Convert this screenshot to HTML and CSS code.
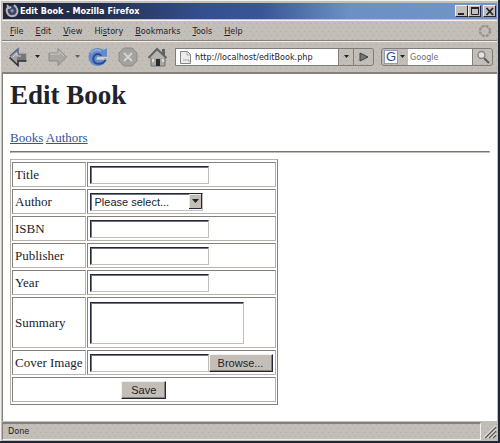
FILE: index.html
```html
<!DOCTYPE html>
<html lang="en">
<head>
<meta charset="utf-8">
<title>Edit Book</title>
<link rel="stylesheet" href="styles.css">
</head>
<body>
<div class="window">
  <header class="titlebar">
    <svg class="app-icon" width="14" height="14" viewBox="0 0 14 14" aria-hidden="true">
      <circle cx="7" cy="7" r="5.5" fill="#3c4664"/>
      <path d="M2 1 L4 4 L6 3 M3 3 C0 7 3 13 8 12 C12 12 14 7 11 3 L9 1" fill="none" stroke="#b9b6b2" stroke-width="2"/>
      <path d="M5 6 L8 5 L9 7 L7 9 Z" fill="#7896c8"/>
    </svg>
    <span class="caption">Edit Book - Mozilla Firefox</span>
    <div class="window-buttons">
      <button class="win-btn" aria-label="Minimize"><svg width="10" height="9" viewBox="0 0 10 9"><path d="M1 7h6" stroke="#20222c" stroke-width="2"/></svg></button>
      <button class="win-btn" aria-label="Maximize"><svg width="10" height="9" viewBox="0 0 10 9"><path d="M1.500 1v6.500h7V1M1 1h8" fill="none" stroke="#20222c"/><path d="M1 1h8" stroke="#20222c" stroke-width="2"/></svg></button>
      <button class="win-btn win-close" aria-label="Close"><svg width="10" height="9" viewBox="0 0 10 9"><path d="M1.500 1l6.500 7M8 1L1.500 8" stroke="#20222c" stroke-width="1.800"/></svg></button>
    </div>
  </header>

  <nav class="menubar">
    <button class="menu"><u>F</u>ile</button>
    <button class="menu"><u>E</u>dit</button>
    <button class="menu"><u>V</u>iew</button>
    <button class="menu">Hi<u>s</u>tory</button>
    <button class="menu"><u>B</u>ookmarks</button>
    <button class="menu"><u>T</u>ools</button>
    <button class="menu"><u>H</u>elp</button>
    <svg class="throbber" width="14" height="14" viewBox="0 0 14 14" aria-hidden="true"><circle cx="7" cy="7" r="5" fill="none" stroke="#96938f" stroke-width="2.500" stroke-dasharray="2.900 1.027"/></svg>
  </nav>

  <div class="toolbar">
    <div class="tools">
      <button class="tool" aria-label="Back"><svg width="20" height="20" viewBox="0 0 20 20"><path d="M1 10L10 1.500V6h8.500v8H10v4.500z" fill="#a3a19f"/><path d="M9 7h9v7H9z" fill="#777"/><path d="M2 9L10 2v5" fill="none" stroke="#53668e" stroke-width="1.500"/><path d="M1.500 10.500L10 18.500V14h8.500" fill="none" stroke="#292c36" stroke-width="1.500"/><path d="M5 10l4-4v3h4" fill="none" stroke="#d8d6d2"/></svg></button>
      <button class="drop" aria-label="Back history"><svg width="5" height="4" viewBox="0 0 5 4"><path d="M0 0h5L2.500 3z" fill="#22242c"/></svg></button>
      <button class="tool tool-forward" aria-label="Forward"><svg width="20" height="20" viewBox="0 0 20 20"><path d="M18.500 10L10 1.500V6H1v8h9v4.500z" fill="#a9a7a4" stroke="#8b8987"/><path d="M2 7h9V4l5 5" fill="none" stroke="#c9c6c1"/></svg></button>
      <button class="drop" aria-label="Forward history"><svg width="5" height="4" viewBox="0 0 5 4"><path d="M0 0h5L2.500 3z" fill="#62615f"/></svg></button>
      <button class="tool tool-reload" aria-label="Reload"><svg width="20" height="20" viewBox="0 0 20 20"><path d="M9.500 1C13 1 14 2 15.500 3L19 1v9h-1C18 16 14 19 9.500 19S.500 15 .500 10 4 1 9.500 1z" fill="#648bc8"/><path d="M3 6C5 3 9 2 13 4" fill="none" stroke="#8eabd8" stroke-width="2"/><path d="M17.500 13C15 18 7 18 5.500 13.500C4.500 9.500 7 7 10 7C11.500 7 12.500 7.500 13 9" fill="none" stroke="#294b95" stroke-width="2"/><path d="M9 10.500h10M8.500 12h8" stroke="#d0ced0" stroke-width="1.300"/></svg></button>
      <button class="tool tool-stop" aria-label="Stop"><svg width="20" height="20" viewBox="0 0 20 20"><path d="M6 1h8l5 5v8l-5 5H6l-5-5V6z" fill="#a4a29f" stroke="#8d8b88"/><path d="M6 6l8 8M14 6l-8 8" stroke="#d7d4cf" stroke-width="2"/></svg></button>
      <button class="tool tool-home" aria-label="Home"><svg width="20" height="20" viewBox="0 0 20 20"><path d="M3 9h14v10H3z" fill="#aaa7a3" stroke="#737170"/><path d="M14 2h3v6h-3z" fill="#61605f"/><path d="M.500 11L9 2l9.500 9" fill="#b7b4af" stroke="#64625f" stroke-width="2"/><path d="M8 12h4v7H8z" fill="#292b33"/><path d="M4 12h2v3H4zM14 12h2v3h-2z" fill="#e0ddd8"/></svg></button>
    </div>
    <form class="location">
      <label class="page-icon" for="url"><svg width="11" height="13" viewBox="0 0 11 13" aria-label="Location"><path d="M.500.500h7l3 3v9H.500z" fill="#eeece8" stroke="#85848a"/><path d="M7 1v3h3M3 9h6v2" fill="none" stroke="#acaaa8"/></svg></label>
      <input id="url" class="bar-input" type="text" value="http://localhost/editBook.php">
      <button class="bar-btn" type="button" aria-label="Show history"><svg width="5" height="4" viewBox="0 0 5 4"><path d="M0 0h5L2.500 3z" fill="#22242c"/></svg></button>
      <button class="bar-btn bar-go" type="button" aria-label="Go"><svg width="10" height="10" viewBox="0 0 10 10"><path d="M1 1l8 4-8 4z" fill="#777" stroke="#383a40"/></svg></button>
    </form>
    <form class="search">
      <button class="engine" type="button" aria-label="Search engine"><span class="engine-logo">G</span><svg width="5" height="4" viewBox="0 0 5 4"><path d="M0 0h5L2.500 3z" fill="#22242c"/></svg></button>
      <input class="bar-input search-input" type="text" placeholder="Google" aria-label="Search">
      <button class="bar-btn" type="button" aria-label="Search"><svg width="14" height="14" viewBox="0 0 14 14"><path d="M8 8l5 5" stroke="#5c5b5a" stroke-width="2"/><circle cx="5.500" cy="5" r="3.500" fill="#e3e2df" stroke="#85878d" stroke-width="1.500"/></svg></button>
    </form>
  </div>

  <main class="page">
    <h1>Edit Book</h1>
    <div class="links"><a href="#">Books</a> <a href="#">Authors</a></div>
    <hr>
    <form>
      <table class="form-table">
        <tr><td class="name"><label for="title">Title</label></td><td><input id="title" class="field" type="text"></td></tr>
        <tr><td><label for="author">Author</label></td><td><span class="select-box"><select id="author"><option>Please select...</option></select><svg class="select-arrow" width="13" height="15" viewBox="0 0 13 15" aria-hidden="true"><path d="M0 0h13v15H0z" fill="#c3bfb8"/><path d="M0 14.500h12.500V0" fill="none" stroke="#22263a"/><path d="M.500 14V.500H12" fill="none" stroke="#ece9e4"/><path d="M3 5h7L6.500 9z" fill="#22242c"/></svg></span></td></tr>
        <tr><td><label for="isbn">ISBN</label></td><td><input id="isbn" class="field" type="text"></td></tr>
        <tr><td><label for="publisher">Publisher</label></td><td><input id="publisher" class="field" type="text"></td></tr>
        <tr><td><label for="year">Year</label></td><td><input id="year" class="field" type="text"></td></tr>
        <tr class="tall"><td><label for="summary">Summary</label></td><td><textarea id="summary" class="area"></textarea></td></tr>
        <tr><td><label for="cover">Cover Image</label></td><td><div class="upload"><input id="cover" class="field" type="text"><button class="push" type="button">Browse...</button></div></td></tr>
        <tr><td colspan="2" class="actions"><button class="push save" type="button">Save</button></td></tr>
      </table>
    </form>
  </main>

  <footer class="statusbar">
    <span class="status">Done</span>
    <svg class="grip" width="16" height="18" viewBox="0 0 16 18" aria-hidden="true"><path d="M4 16L15 5M8 16l7-7M12 16l3-3" stroke="#595857" stroke-width="1.500"/><path d="M2.500 16L15 3.500M6.500 16L15 7.500M10.500 16l4.500-4.500" stroke="#f4f2ee"/></svg>
  </footer>
</div>
</body>
</html>
```
FILE: styles.css
```css
:root {
  --face: #c3bfb8;
  --dot: #aeaba6;
  --shade: #84817c;
  --light: #f3f1ed;
  --ink: #22263a;
  --ui: "DejaVu Sans Condensed", "DejaVu Sans", sans-serif;
}

* { box-sizing: border-box; }

body {
  margin: 0;
  background: var(--face);
  font-family: "Liberation Serif", serif;
  font-size: 13px;
  color: #20222c;
}

button, input, select, textarea {
  margin: 0;
  padding: 0;
  border: 0;
  border-radius: 0;
  background: none;
  color: inherit;
  font: 11px "Liberation Sans", sans-serif;
  outline: 0;
}

svg { display: block; flex: none; }

.window {
  display: flex;
  flex-direction: column;
  min-height: 100vh;
  padding: 3px 1px 1px 2px;
  background: var(--face);
  border-right: 2px solid var(--ink);
  border-bottom: 2px solid var(--ink);
  box-shadow: inset 1px 1px var(--light);
}

.titlebar {
  display: flex;
  align-items: center;
  height: 16px;
  margin-left: 1px;
  padding: 0 1px 0 2px;
  gap: 1px;
  background: linear-gradient(90deg, #20253a 0%, #24304f 20%, #344f8f 40%, #385595 52%, #6c90c4 70%, #7295c7 100%);
}

.caption {
  flex: 1;
  color: #fff;
  font: bold 9px/16px var(--ui);
  white-space: nowrap;
}

.window-buttons { display: flex; }

.win-btn {
  display: flex;
  align-items: center;
  justify-content: center;
  width: 13px;
  height: 12px;
  background: var(--face);
  border: 1px solid;
  border-color: var(--light) var(--ink) var(--ink) var(--light);
}

.win-close { margin-left: 2px; }

.menubar, .toolbar, .statusbar {
  background:
    conic-gradient(from 270deg at 1px 1px, var(--dot) 90deg, transparent 0) 2px 2px / 6px 8px,
    conic-gradient(from 270deg at 1px 1px, var(--dot) 90deg, transparent 0) 5px 6px / 6px 8px,
    var(--face);
}

.menubar {
  display: flex;
  align-items: center;
  height: 21px;
  padding: 0 5px 0 8px;
  gap: 12px;
  border-top: 1px solid var(--light);
  border-bottom: 1px solid var(--shade);
  margin-top: 1px;
}

.menu { font: 9px/16px var(--ui); }

.throbber { margin-left: auto; }

.toolbar {
  display: flex;
  align-items: center;
  height: 31px;
  padding: 0 4px 0 6px;
  border-top: 1px solid var(--light);
}

.tools { display: flex; align-items: center; margin-right: 7px; }
.drop { margin-left: 7px; }
.tool-forward { margin-left: 8px; }
.tool-reload { margin-left: 8px; }
.tool-stop { margin-left: 10px; }
.tool-home { margin-left: 10px; }

.location, .search {
  display: flex;
  height: 18px;
  border: 1px solid #7e7c78;
  border-radius: 0 3px 3px 0;
}

.location { flex: 1; min-width: 0; margin-right: 7px; }
.search { flex: none; width: 112px; border-radius: 3px; }

.page-icon {
  display: flex;
  align-items: center;
  padding: 0 4px;
  background: #fff;
}

.bar-input {
  flex: 1;
  min-width: 0;
  background: #fff;
  font: 9px var(--ui);
}

.search-input { padding-left: 2px; }
.search-input::placeholder { color: #6e6d6b; opacity: 1; }

.bar-btn {
  display: flex;
  align-items: center;
  justify-content: center;
  width: 15px;
  border-left: 1px solid var(--shade);
}

.bar-go, .search .bar-btn { width: 20px; }

.engine { display: flex; align-items: center; gap: 2px; padding: 0 3px 0 2px; }

.engine-logo {
  width: 14px;
  height: 14px;
  background: #fff;
  border: 1px solid #8d9bb8;
  color: #2c4b91;
  font: 13px/12px "Liberation Sans", sans-serif;
  text-align: center;
}

.page {
  flex: 1;
  padding: 6px 7px 0;
  background: #fff;
  border-top: 2px solid var(--shade);
  border-left: 1px solid var(--shade);
}

h1 { margin: 0 0 20px; font-size: 27px; line-height: 30px; }

.links { line-height: 16px; }

a { color: #35529a; }

hr {
  margin: 5px 0 6px;
  border: 1px solid;
  border-color: #777572 #c3bfb8 #c3bfb8 #777572;
}

.form-table {
  border: 1px solid;
  border-color: #b5b1ab #84817c #84817c #b5b1ab;
  border-spacing: 1px 2px;
}

.form-table td {
  height: 25px;
  padding: 2px;
  border: 1px solid;
  border-color: #84817c #b5b1ab #b5b1ab #84817c;
  line-height: 16px;
  white-space: nowrap;
}

.form-table .name { width: 73px; }

.field, .area, .select-box {
  display: block;
  width: 119px;
  height: 18px;
  background: #fff;
  border: 1px solid;
  border-color: var(--ink) #c3bfb8 #c3bfb8 var(--ink);
  box-shadow: inset 1px 1px #73747c;
}

.area { width: 154px; height: 42px; resize: none; }
.form-table .tall td { height: 51px; }

.select-box { display: flex; align-items: center; width: 113px; padding-left: 1px; }
.select-box select { flex: 1; min-width: 0; width: 100%; padding-left: 3px; appearance: none; }
.select-arrow { pointer-events: none; }

.upload { display: flex; }

.push {
  width: 64px;
  height: 18px;
  background: var(--face);
  border: 1px solid;
  border-color: var(--light) var(--ink) var(--ink) var(--light);
  box-shadow: inset -1px -1px var(--shade);
}

.actions { text-align: center; }
.save { display: block; width: 45px; margin: 0 auto; }

.statusbar {
  display: flex;
  height: 19px;
  border-top: 1px solid var(--face);
}

.status {
  flex: 1;
  padding-left: 5px;
  border: 1px solid;
  border-color: var(--shade) var(--light) var(--light) var(--shade);
  border-top-width: 2px;
  font: 9px/15px var(--ui);
}
```
